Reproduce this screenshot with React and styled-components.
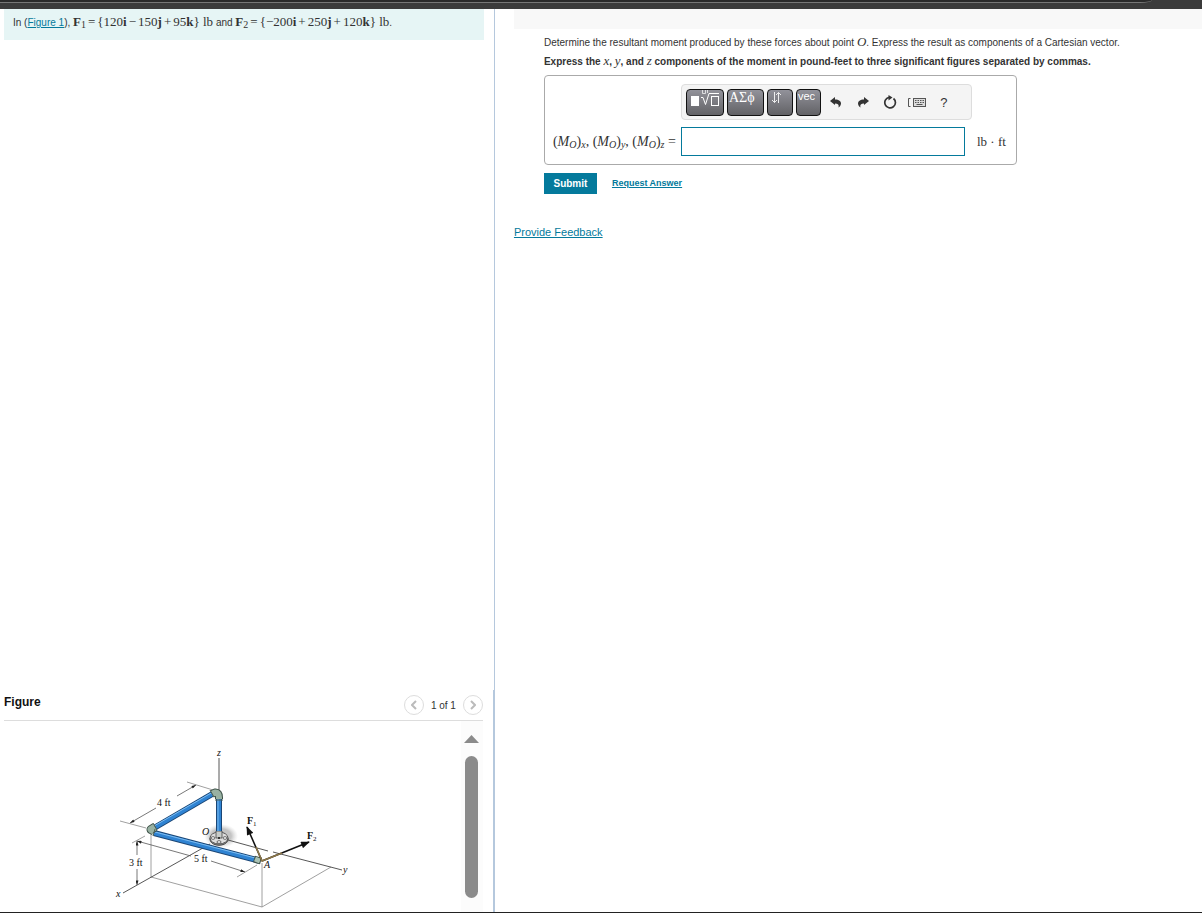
import React from 'react'
import styled, { createGlobalStyle } from 'styled-components'

const GlobalStyle = createGlobalStyle`
*{
    box-sizing: border-box;
}
body{
    margin: 0;
    background: #fff;
    color: #333;
    font-family: "Liberation Sans", Arial, sans-serif;
    font-size: 10px;
}
`

function MomentLabel({ axis }) {
  return (
    <>(<i>M</i><Sub><i>O</i></Sub>)<Sub><i>{axis}</i></Sub></>
  )
}

function Toolbar() {
  return (
    <ToolbarBox>
      <ToolKey type="button" $width="38px" aria-label="Templates">
        <svg width="32" height="18" viewBox="0 0 32 18" fill="none" stroke="#fff">
          <rect x="3" y="6" width="8" height="10" fill="#fff" stroke="none" />
          <path d="M13 7.500h2l2.500 7L21 3.500h10" />
          <path d="M14.500 0v3.500h3V0M19.500 0v3" opacity=".7" />
          <rect x="23.500" y="6.500" width="7" height="9" />
        </svg>
      </ToolKey>
      <ToolKey type="button" $width="37px" $serif>ΑΣϕ</ToolKey>
      <ToolKey type="button" $width="26px" aria-label="Arrows">
        <svg width="14" height="14" viewBox="0 0 14 14" fill="none" stroke="#eee">
          <path d="M5.500 2v10.500M3 10l2.500 2.500L8 10M9.500 13V2.500M7 5l2.500-2.500L12 5" />
        </svg>
      </ToolKey>
      <ToolKey type="button" $width="25px">vec</ToolKey>
      <IconButton type="button" aria-label="Undo">
        <svg width="12" height="12" viewBox="0 0 12 12" fill="#333">
          <path d="M0 5L5 1v2.500c4 0 6 2 6 4 0 1.500-1 3-2.500 4 .8-2.500-.5-4-3.500-4V9z" />
        </svg>
      </IconButton>
      <IconButton type="button" aria-label="Redo">
        <svg width="12" height="12" viewBox="0 0 12 12" fill="#333">
          <path d="M12 5L7 1v2.500c-4 0-6 2-6 4 0 1.500 1 3 2.500 4-.8-2.500.5-4 3.500-4V9z" />
        </svg>
      </IconButton>
      <IconButton type="button" aria-label="Reset">
        <svg width="14" height="14" viewBox="0 0 14 14" fill="none" stroke="#333" strokeWidth="1.700">
          <path d="M10.500 3.500A5.300 5.300 0 1 1 6 2.400" />
          <path d="M5.500 0l4 2.500-4 3z" fill="#333" stroke="none" />
        </svg>
      </IconButton>
      <IconButton type="button" aria-label="Keyboard shortcuts">
        <svg width="20" height="9" viewBox="0 0 20 9" fill="none" stroke="#555">
          <path d="M3.500.5h-2v8h2" />
          <rect x="6.500" y=".5" width="12" height="8" fill="#ddd" />
          <path d="M8 2.500h9M8 4.500h9" strokeDasharray="1.500 1" />
          <path d="M9.500 6.500h6" />
        </svg>
      </IconButton>
      <IconButton type="button" aria-label="Help">?</IconButton>
    </ToolbarBox>
  )
}

function PipeFigure() {
  return (
    <svg width="240" height="172" viewBox="0 0 240 172" role="img" aria-label="Pipe assembly with forces F1 and F2 at A">
      <defs>
        <marker id="dim" viewBox="0 0 6 4" refX="6" refY="2" markerWidth="6" markerHeight="3" markerUnits="userSpaceOnUse" orient="auto">
          <path d="M0 0l6 2-6 2z" fill="#222" />
        </marker>
        <marker id="force" viewBox="0 0 10 8" refX="9" refY="4" markerWidth="10" markerHeight="7" markerUnits="userSpaceOnUse" orient="auto">
          <path d="M0 0l10 4-10 4z" fill="#111" />
        </marker>
        <radialGradient id="ground">
          <stop offset=".6" stopColor="#c4c4c4" />
          <stop offset="1" stopColor="#ddd" stopOpacity="0" />
        </radialGradient>
      </defs>

      <ellipse cx="109" cy="96" rx="17" ry="12" fill="url(#ground)" />
      <g fill="none" stroke="#888" strokeWidth=".8">
        <path d="M39 94v43l111 30 69-40M150 123v44" />
        <path d="M75 42l26 8M8 81l26 7M20 103l13-7M125 137l20-12" />
      </g>
      <g fill="none" stroke="#444" strokeWidth=".9">
        <path d="M107 18v33M11 153l87-49M116 100l40 11M161 112l69 18" />
      </g>
      <g fill="none" stroke="#555" strokeWidth=".8">
        <path d="M65 56l19-11" markerEnd="url(#dim)" />
        <path d="M44 68L18 83" markerEnd="url(#dim)" />
        <path d="M25 115v-14" markerEnd="url(#dim)" />
        <path d="M25 129v16" markerEnd="url(#dim)" />
        <path d="M79 116l-54-15" markerEnd="url(#dim)" />
        <path d="M99 121l34 11" markerEnd="url(#dim)" />
      </g>

      <path d="M98 98v2c2 7 16 7 18 0v-2" fill="#999" stroke="#444" />
      <ellipse cx="107" cy="98" rx="9" ry="6" fill="#ddd" stroke="#555" />
      <g fill="#fff" stroke="#444" strokeWidth=".8">
        <ellipse cx="101" cy="98" rx="2" ry="1.300" />
        <ellipse cx="113" cy="98" rx="2" ry="1.300" />
        <ellipse cx="107" cy="102" rx="2" ry="1.300" />
        <path d="M104 91h6v7h-6z" fill="#c8ccc9" />
      </g>
      <circle cx="107" cy="98" r="1" fill="#111" />

      <g fill="none">
        <g stroke="#1b4675" strokeWidth="6">
          <path d="M107 59v32M102 53L42 88M42 93l106 28" />
        </g>
        <g stroke="#2f83d2" strokeWidth="4">
          <path d="M107 59v32M102 53L42 88M42 93l106 28" />
        </g>
        <g stroke="#7dbcf0" strokeWidth="1">
          <path d="M106 59v32M101 52L42 86M43 92l104 27" />
        </g>
        <g strokeLinejoin="round">
          <path d="M100 54l3-1.500q4-.5 4 5v1.500" stroke="#3e5148" strokeWidth="8" />
          <path d="M100 54l3-1.500q4-.5 4 5v1.500" stroke="#98b1a2" strokeWidth="6" />
          <path d="M43 87l-4 2.500 3 1.500" stroke="#3e5148" strokeWidth="9" />
          <path d="M43 87l-4 2.500 3 1.500" stroke="#98b1a2" strokeWidth="7" />
        </g>
        <path d="M98 50l4 7M103 60h8M41 83l4 7M43 89l-2 7" stroke="#4c6055" strokeWidth="1" />
        <path d="M142 119l7 2" stroke="#3e5148" strokeWidth="7" />
        <path d="M143 119l5 2" stroke="#a9c2b4" strokeWidth="5" />
      </g>

      <g fill="none" strokeWidth="1.600">
        <path d="M150 121l-15-34" stroke="#111" markerEnd="url(#force)" />
        <path d="M150 121l47-19" stroke="#111" markerEnd="url(#force)" />
        <path d="M144 107l6 14 20-8" stroke="#8c7648" />
      </g>

      <FigureText>
        <text x="105" y="16" fontStyle="italic">z</text>
        <text x="4" y="157" fontStyle="italic">x</text>
        <text x="231" y="133" fontStyle="italic">y</text>
        <text x="90" y="95" fontStyle="italic">O</text>
        <text x="152" y="128" fontStyle="italic">A</text>
        <text x="45" y="66">4 ft</text>
        <text x="17" y="126">3 ft</text>
        <text x="82" y="122">5 ft</text>
        <text x="135" y="84"><tspan fontWeight="bold">F</tspan><tspan fontSize="7" dy="2">1</tspan></text>
        <text x="195" y="99"><tspan fontWeight="bold">F</tspan><tspan fontSize="7" dy="2">2</tspan></text>
      </FigureText>
    </svg>
  )
}

function App() {
  return (
    <Page>
      <GlobalStyle />
      <BrowserBar><AddressEdge /></BrowserBar>
      <Columns>
        <Left>
          <Problem>
            In (<TextLink href="#figure">Figure 1</TextLink>),{' '}
            <Formula>
              <b>F</b><Sub>1</Sub><Op>=</Op>{'{'}120<b>i</b><Op>−</Op>150<b>j</b><Op>+</Op>95<b>k</b>{'}'} lb
            </Formula>
            {' '}and{' '}
            <Formula>
              <b>F</b><Sub>2</Sub><Op>=</Op>{'{'}−200<b>i</b><Op>+</Op>250<b>j</b><Op>+</Op>120<b>k</b>{'}'} lb
            </Formula>.
          </Problem>
          <FigurePanel id="figure">
            <FigureHeader>
              <h2>Figure</h2>
              <Pager>
                <PageButton type="button" aria-label="Previous figure">
                  <svg width="6" height="10" viewBox="0 0 6 10" fill="none" stroke="#bbb" strokeWidth="2"><path d="M5 1L1 5l4 4" /></svg>
                </PageButton>
                <span>1 of 1</span>
                <PageButton type="button" aria-label="Next figure">
                  <svg width="6" height="10" viewBox="0 0 6 10" fill="none" stroke="#bbb" strokeWidth="2"><path d="M1 1l4 4-4 4" /></svg>
                </PageButton>
              </Pager>
            </FigureHeader>
            <FigureBody>
              <FigureView><PipeFigure /></FigureView>
              <ScrollTrack>
                <svg width="15" height="8" viewBox="0 0 15 8" fill="#8b8b8b"><path d="M7.500 0L15 8H0z" /></svg>
                <ScrollThumb />
              </ScrollTrack>
            </FigureBody>
          </FigurePanel>
        </Left>
        <Right>
          <PartBar />
          <Part>
            <Question>
              Determine the resultant moment produced by these forces about point <Formula><i>O</i></Formula>. Express the result as components of a Cartesian vector.
            </Question>
            <Question $bold>
              Express the <Formula><i>x</i></Formula>, <Formula><i>y</i></Formula>, and <Formula><i>z</i></Formula> components of the moment in pound-feet to three significant figures separated by commas.
            </Question>
            <AnswerBox>
              <AnswerLabel htmlFor="answer">
                <MomentLabel axis="x" />, <MomentLabel axis="y" />, <MomentLabel axis="z" /> =
              </AnswerLabel>
              <Toolbar />
              <AnswerInput id="answer" type="text" />
              <Unit>lb · ft</Unit>
            </AnswerBox>
            <Actions>
              <Submit type="submit">Submit</Submit>
              <RequestLink href="#answer">Request Answer</RequestLink>
            </Actions>
          </Part>
          <Feedback href="#feedback">Provide Feedback</Feedback>
        </Right>
      </Columns>
    </Page>
  )
}

export default App

const Page = styled.div`
display: flex;
flex-direction: column;
min-height: 100vh;
border-bottom: 1px solid #222;
`
const BrowserBar = styled.header`
height: 9px;
background: #3b3b3b;
`
const AddressEdge = styled.div`
height: 3px;
margin-right: 50px;
background: #2a2a2a;
border-bottom: 1px solid #777;
border-bottom-right-radius: 12px 3px;
`
const Columns = styled.main`
flex: 1;
display: grid;
grid-template-columns: 7fr 10fr;
`
const Left = styled.section`
display: flex;
flex-direction: column;
justify-content: space-between;
min-width: 0;
border-right: 1px solid #b5c8dd;
padding-left: 4px;
`
const Problem = styled.div`
margin-right: 10px;
padding: 5px 9px;
min-height: 31px;
line-height: 18px;
background: #e6f5f5;
`
const Formula = styled.span`
font-family: "Liberation Serif", "Times New Roman", serif;
font-size: 13px;
font-weight: normal;
line-height: 1px;
`
const Sub = styled.sub`
font-size: 10px;
line-height: 1px;
vertical-align: -2px;
`
const Op = styled.span`
margin: 0 2px;
`
const TextLink = styled.a`
color: #047a9c;
`
const FigurePanel = styled.section`
border-right: 1px solid #b5c8dd;
padding-right: 10px;
`
const FigureHeader = styled.header`
display: flex;
justify-content: space-between;
align-items: center;
height: 31px;
border-bottom: 1px solid #ddd;

h2{
    margin: 0;
    padding-bottom: 6px;
    font-size: 12px;
    color: #111;
}
`
const Pager = styled.nav`
display: flex;
align-items: center;
gap: 7px;
`
const PageButton = styled.button`
display: flex;
align-items: center;
justify-content: center;
width: 20px;
height: 20px;
padding: 0;
border: 1px solid #ddd;
border-radius: 50%;
background: #fff;
`
const FigureBody = styled.div`
display: flex;
height: 191px;
`
const FigureView = styled.div`
flex: 1;
display: flex;
justify-content: center;
align-items: flex-end;
`
const FigureText = styled.g`
font-family: "Liberation Serif", "Times New Roman", serif;
font-size: 10px;
fill: #111;
`
const ScrollTrack = styled.div`
display: flex;
flex-direction: column;
align-items: center;
gap: 13px;
width: 22px;
padding: 14px 0;
background: #fcfcfc;
`
const ScrollThumb = styled.div`
flex: 1;
width: 13px;
border-radius: 7px;
background: #8b8b8b;
`
const Right = styled.section`
min-width: 0;
padding-left: 19px;
`
const PartBar = styled.div`
height: 20px;
background: #f8f8f8;
`
const Part = styled.form`
padding: 4px 30px 0;
`
const Question = styled.p`
margin: 0;
line-height: 19px;
font-weight: ${({ $bold }) => ($bold ? 'bold' : 'normal')};
`
const AnswerBox = styled.div`
display: grid;
grid-template-columns: 128px 284px auto;
justify-content: start;
align-items: center;
row-gap: 7px;
width: 473px;
max-width: 100%;
margin-top: 4px;
padding: 8px;
border: 1px solid #aaa;
border-radius: 4px;
`
const AnswerLabel = styled.label`
grid-column: 1;
grid-row: 2;
font-family: "Liberation Serif", "Times New Roman", serif;
font-size: 14px;
white-space: nowrap;
`
const ToolbarBox = styled.div`
grid-column: 2 / 4;
grid-row: 1;
display: flex;
align-items: center;
gap: 3px;
width: 291px;
height: 36px;
padding: 0 4px;
border: 1px solid #ddd;
border-radius: 4px;
background: #f4f4f4;
`
const ToolKey = styled.button`
display: flex;
align-items: flex-start;
justify-content: flex-start;
width: ${({ $width }) => $width};
height: 27px;
padding: 0 1px;
border: 1px solid #111;
border-radius: 4px;
background: linear-gradient(#92929a, #626266);
color: #fff;
font-family: ${({ $serif }) => ($serif ? '"Liberation Serif", serif' : '"Liberation Sans", sans-serif')};
font-size: ${({ $serif }) => ($serif ? '14px' : '11px')};
`
const IconButton = styled.button`
display: flex;
align-items: center;
justify-content: center;
width: 24px;
height: 24px;
padding: 0;
border: 0;
background: none;
color: #333;
font-family: "Liberation Sans", sans-serif;
font-size: 13px;
`
const AnswerInput = styled.input`
grid-column: 2;
grid-row: 2;
appearance: none;
width: 100%;
height: 29px;
border: 1px solid #047a9c;
border-radius: 0;
background: #fff;
`
const Unit = styled.span`
grid-column: 3;
grid-row: 2;
padding-left: 12px;
font-family: "Liberation Serif", "Times New Roman", serif;
font-size: 13px;
`
const Actions = styled.div`
display: flex;
align-items: center;
gap: 15px;
margin-top: 8px;
`
const Submit = styled.button`
width: 53px;
height: 21px;
padding: 0;
border: 0;
background: #047a9c;
color: #fff;
font-family: "Liberation Sans", sans-serif;
font-size: 10px;
font-weight: bold;
`
const RequestLink = styled.a`
padding-bottom: 2px;
color: #047a9c;
font-size: 9px;
font-weight: bold;
`
const Feedback = styled.a`
display: inline-block;
margin-top: 32px;
color: #047a9c;
font-size: 11px;
`
